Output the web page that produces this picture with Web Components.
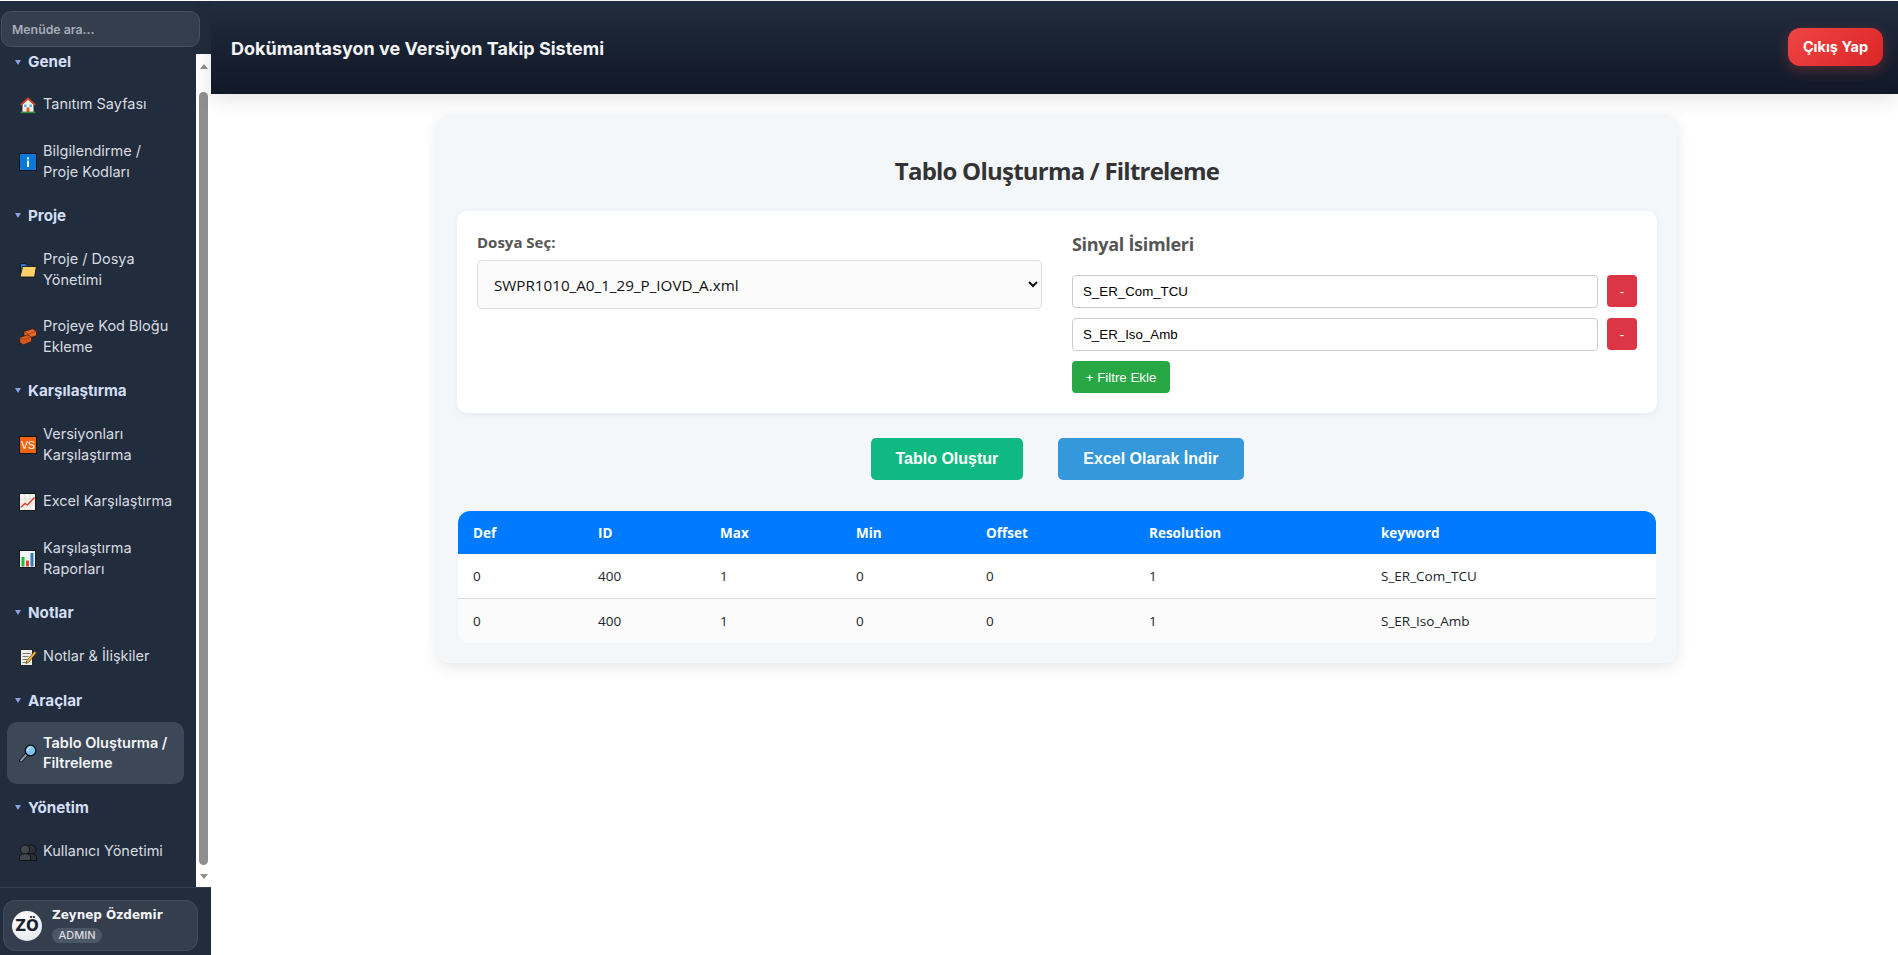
<!DOCTYPE html>
<html lang="tr">
<head>
<meta charset="utf-8">
<title>Dokümantasyon ve Versiyon Takip Sistemi</title>
<style>
    html, body { margin: 0; height: 100%; background: #fff; overflow: hidden; }
    body { font-family: "Open Sans", "Noto Sans", sans-serif; }
</style>
</head>
<body>
<app-shell>
    <app-sidebar slot="sidebar">
        <nav-heading>Genel</nav-heading>
        <nav-item icon="house">Tanıtım Sayfası</nav-item>
        <nav-item icon="info">Bilgilendirme / Proje Kodları</nav-item>
        <nav-heading>Proje</nav-heading>
        <nav-item icon="folder">Proje / Dosya Yönetimi</nav-item>
        <nav-item icon="bricks">Projeye Kod Bloğu Ekleme</nav-item>
        <nav-heading>Karşılaştırma</nav-heading>
        <nav-item icon="vs">Versiyonları Karşılaştırma</nav-item>
        <nav-item icon="trend">Excel Karşılaştırma</nav-item>
        <nav-item icon="bars">Karşılaştırma Raporları</nav-item>
        <nav-heading>Notlar</nav-heading>
        <nav-item icon="memo">Notlar &amp; İlişkiler</nav-item>
        <nav-heading>Araçlar</nav-heading>
        <nav-item icon="search" active>Tablo Oluşturma / Filtreleme</nav-item>
        <nav-heading>Yönetim</nav-heading>
        <nav-item icon="users">Kullanıcı Yönetimi</nav-item>
    </app-sidebar>
    <top-header slot="header"></top-header>
    <filter-page></filter-page>
</app-shell>

<script>
    // kucuk yardimci: shadow root'u string'den kurar
    function mount(el, html) {
        el.attachShadow({ mode: 'open' }).innerHTML = html;
    }

    const ICONS = {
        house: `<path d="M9 1.5 1.5 8.5h2V16h11V8.5h2z" fill="#f5f0e6"/><path d="M9 1 1 8.6l1.2 1L9 3.4l6.8 6.2 1.2-1z" fill="#d9472f" stroke="#5a1d12" stroke-width=".5"/><rect x="5" y="8.5" width="2.6" height="2.6" fill="#5ab8ec"/><rect x="10.4" y="8.5" width="2.6" height="2.6" fill="#5ab8ec"/><rect x="7.6" y="11.5" width="2.8" height="4.5" fill="#e8552f"/><rect x="1.5" y="15.6" width="15" height="1.6" fill="#2f8f3a"/>`,
        info: `<rect x=".5" y=".5" width="17" height="17" fill="#0a78d4" stroke="#0b1420"/><rect x="8" y="7.6" width="2" height="6.4" fill="#fff"/><rect x="8" y="4.4" width="2" height="2" fill="#fff"/>`,
        folder: `<path d="M1.5 14.5V2.5h5l1.2 1.6H14v3" fill="#2f78c4" stroke="#10161f" stroke-width=".9"/><path d="M3.6 5.5H17.4l-1.8 10.5H1z" fill="#fdd068" stroke="#10161f" stroke-width=".9" stroke-linejoin="round"/>`,
        bricks: `<path d="M5 3.5 13.5.8 17.5 3v4.5L9.5 10.5 5 8z" fill="#e5682a" stroke="#2c1a12" stroke-width=".7"/><path d="M.8 9.5 8.5 6.8 12.5 9v4.5L4.5 16.8.8 14.5z" fill="#d9591f" stroke="#2c1a12" stroke-width=".7"/><path d="M5 3.5 9.5 6l8-3M.8 9.5l3.8 2.3 7.9-2.8" fill="none" stroke="#8e3a14" stroke-width=".7"/>`,
        vs: `<rect x=".5" y=".5" width="17" height="17" fill="#f2640f" stroke="#1a120c"/><text x="9" y="13" text-anchor="middle" font-family="Liberation Sans, sans-serif" font-size="10.5" fill="#fff">VS</text>`,
        trend: `<rect x=".5" y=".5" width="16" height="17" fill="#f5f3ef" stroke="#14171c"/><path d="M1 6h15M1 11h15M6 1v16M11 1v16" stroke="#d8d5cf" stroke-width=".6"/><path d="M1.8 14.5 6 10.5l2.4 1.6L15.5 4.5" fill="none" stroke="#e8432d" stroke-width="1.5"/>`,
        bars: `<rect x=".5" y=".5" width="16" height="17" fill="#f5f5f5" stroke="#14171c"/><rect x="2.5" y="7" width="3" height="9.5" fill="#27b53b"/><rect x="7" y="10.5" width="3" height="6" fill="#e8432d"/><rect x="11.5" y="3" width="3" height="13.5" fill="#2f78c4"/>`,
        memo: `<path d="M1.5 1.5h12V17.5h-12z" fill="#f0efe9" stroke="#15181d" stroke-width=".9"/><path d="M3.5 5.5h8M3.5 8.5h6M3.5 11.5h5M3.5 14.5h4" stroke="#77797d" stroke-width="1"/><path d="M7.5 13 15.5 3.2l2 1.6-8 9.8-2.6.9z" fill="#f4b62d" stroke="#3d2a0a" stroke-width=".6"/>`,
        search: `<path d="M2 16.5 7.5 10.5" stroke="#10131a" stroke-width="4" stroke-linecap="round"/><path d="M2 16.5 7.5 10.5" stroke="#8f9aa8" stroke-width="2" stroke-linecap="round"/><circle cx="11.5" cy="6.5" r="5.3" fill="#7fc4ef" stroke="#10131a" stroke-width="1.3"/><path d="M8.6 7a3 3 0 0 1 3-3.4" fill="none" stroke="#dff3ff" stroke-width="1.1"/>`,
        users: `<circle cx="12.5" cy="6.5" r="4.6" fill="#2c2f35" stroke="#0a0b0e" stroke-width=".8"/><path d="M7.5 17.5v-3c0-2.6 2-3.8 5-3.8s5 1.2 5 3.8v3z" fill="#2c2f35" stroke="#0a0b0e" stroke-width=".8"/><circle cx="6" cy="6.5" r="4.6" fill="#43464d" stroke="#0a0b0e" stroke-width=".8"/><path d="M.5 17.5v-3c0-2.6 2.2-3.8 5.6-3.8s5.6 1.2 5.6 3.8v3z" fill="#43464d" stroke="#0a0b0e" stroke-width=".8"/>`
    };

    class AppShell extends HTMLElement {
        constructor() {
            super();
            mount(this, `
                <style>
                    :host { display: grid; grid-template-columns: 211px 1fr; height: 955px; box-sizing: border-box; padding-top: 1px; }
                    .main { display: flex; flex-direction: column; min-width: 0; }
                    .content { flex: 1; display: flex; justify-content: center; align-items: flex-start; padding-top: 21px; }
                </style>
                <slot name="sidebar"></slot>
                <div class="main">
                    <slot name="header"></slot>
                    <div class="content"><slot></slot></div>
                </div>
            `);
        }
    }

    class AppSidebar extends HTMLElement {
        constructor() {
            super();
            mount(this, `
                <style>
                    :host { display: flex; flex-direction: column; height: 954px; background: #212c3c; font-family: Inter, sans-serif; }
                    .search { padding: 10px 11px 7px 1px; }
                    input {
                        display: block; width: 100%; height: 36px; box-sizing: border-box;
                        padding: 0 10px; background: #343e4d; border: 1px solid #465162; border-radius: 10px;
                        color: #e5e7eb; font: 600 12.3px Inter, sans-serif; outline: none;
                    }
                    input::placeholder { color: #a6adb8; opacity: 1; }
                    .scroller { flex: 1; display: flex; min-height: 0; }
                    nav { flex: 1; min-width: 0; display: flex; flex-direction: column; overflow: hidden; }
                    .bar { width: 15px; background: #fff; display: flex; flex-direction: column; align-items: center; flex: none; }
                    .arrow { width: 0; height: 0; border-left: 4.5px solid transparent; border-right: 4.5px solid transparent; }
                    .arrow.up { margin-top: 10px; border-bottom: 5px solid #8f8f8f; }
                    .arrow.down { margin-top: 9px; border-top: 5px solid #8f8f8f; }
                    .thumb { width: 9px; height: 773px; margin-top: 23px; background: #8f8f8f; border-radius: 5px; }
                    footer { flex: none; height: 68px; box-sizing: border-box; border-top: 1px solid #323d4d; padding: 12px 13px 3px 3px; }
                </style>
                <div class="search"><input type="text" placeholder="Menüde ara..."></div>
                <div class="scroller">
                    <nav><slot></slot></nav>
                    <div class="bar"><div class="arrow up"></div><div class="thumb"></div><div class="arrow down"></div></div>
                </div>
                <footer><user-card name="Zeynep Özdemir" role="ADMIN" initials="ZÖ"></user-card></footer>
            `);
        }
    }

    class NavHeading extends HTMLElement {
        constructor() {
            super();
            mount(this, `
                <style>
                    :host { flex: none; display: flex; align-items: center; gap: 7px; padding: 8.5px 0 14.5px 15px; line-height: 18px; font-size: 15.2px; font-weight: 700; color: #d3def5; }
                    :host(:first-child) { padding-top: 0; margin-top: -1px; padding-bottom: 13px; }
                    .tri { flex: none; width: 0; height: 0; border-left: 3px solid transparent; border-right: 3px solid transparent; border-top: 5px solid #8da2e0; }
                </style>
                <span class="tri"></span><span><slot></slot></span>
            `);
        }
    }

    class NavItem extends HTMLElement {
        constructor() {
            super();
            const icon = ICONS[this.getAttribute('icon')] || '';
            mount(this, `
                <style>
                    :host { flex: none; display: flex; align-items: center; gap: 6px; margin: 0 12px 6px 7px; padding: 10px 8px 10px 12px; min-height: 21px; border-radius: 10px; font-size: 14.5px; line-height: 20.5px; color: #d8dbe0; }
                    :host([active]) { background: #3c4858; color: #f3f4f6; font-weight: 600; margin-top: -2px; padding-top: 10.5px; padding-bottom: 10.5px; }
                    svg { width: 18px; height: 18px; flex: none; }
                </style>
                <svg viewBox="0 0 18 18">${icon}</svg><span><slot></slot></span>
            `);
        }
    }

    class UserCard extends HTMLElement {
        constructor() {
            super();
            mount(this, `
                <style>
                    :host { display: flex; align-items: center; gap: 10px; height: 51px; box-sizing: border-box; padding: 0 8px; background: #343e4d; border: 1px solid #414c5c; border-radius: 12px; }
                    .avatar { width: 30px; height: 30px; flex: none; border-radius: 50%; background: radial-gradient(circle at 40% 35%, #fff, #dfe2e8); color: #1b2330; display: flex; align-items: center; justify-content: center; font: 700 15px "DejaVu Sans", sans-serif; }
                    .name { font: 700 12px/15px "DejaVu Sans", sans-serif; color: #f3f4f6; }
                    .role { display: inline-block; margin-top: 1px; padding: 0 6.5px; background: #4c5766; border-radius: 8px; font: 500 11px/15px Inter, sans-serif; color: #d8dbe0; }
                </style>
                <div class="avatar">${this.getAttribute('initials')}</div>
                <div><div class="name">${this.getAttribute('name')}</div><div class="role">${this.getAttribute('role')}</div></div>
            `);
        }
    }

    class TopHeader extends HTMLElement {
        constructor() {
            super();
            mount(this, `
                <style>
                    :host { display: flex; align-items: center; justify-content: space-between; height: 93px; box-sizing: border-box; padding: 0 15px 0 20px; background: linear-gradient(180deg, #212c3d, #111827); box-shadow: 0 4px 20px rgba(0,0,0,.12); font-family: Inter, sans-serif; position: relative; }
                    h1 { margin: 2px 0 0; font-size: 18px; font-weight: 700; color: #f3f4f6; }
                    button { width: 95px; height: 38px; margin-top: -2px; padding: 0; border: 0; border-radius: 12px; background: linear-gradient(135deg, #ef4444, #dc2626); color: #fff; font: 700 14.5px Inter, sans-serif; box-shadow: 0 4px 14px rgba(239,68,68,.3); }
                </style>
                <h1>Dokümantasyon ve Versiyon Takip Sistemi</h1>
                <button>Çıkış Yap</button>
            `);
        }
    }

    class SignalRow extends HTMLElement {
        constructor() {
            super();
            mount(this, `
                <style>
                    :host { display: flex; gap: 9px; align-items: flex-start; margin-bottom: 10px; }
                    input { flex: 1; min-width: 0; height: 33px; box-sizing: border-box; padding: 0 10px; border: 1px solid #ccc; border-radius: 4px; background: #fff; font: 13.3px "Liberation Sans", Arial, sans-serif; color: #000; outline: none; }
                    button { width: 30px; height: 32px; padding: 0; border: 0; border-radius: 4px; background: #dc3545; color: #fff; font: 13.3px "Liberation Sans", Arial, sans-serif; }
                </style>
                <input type="text" value="${this.getAttribute('value')}">
                <button>-</button>
            `);
        }
    }

    class ResultTable extends HTMLElement {
        constructor() {
            super();
            const rows = [
                ['0', '400', '1', '0', '0', '1', 'S_ER_Com_TCU'],
                ['0', '400', '1', '0', '0', '1', 'S_ER_Iso_Amb']
            ];
            const widths = [125, 122, 136, 130, 163, 232, 290];
            mount(this, `
                <style>
                    :host { display: block; margin-left: 1px; margin-right: 1px; border-radius: 12px; overflow: hidden; background: #fff; }
                    table { width: 100%; border-collapse: collapse; table-layout: fixed; font-family: "Open Sans", sans-serif; font-size: 14px; }
                    th { height: 43px; padding: 0 15px; background: #007bff; color: #fff; font-size: 13.5px; font-weight: 700; text-align: left; }
                    td { height: 44px; padding: 0 15px; color: #212529; font-size: 13.5px; border-bottom: 1px solid #ddd; }
                    tr:nth-child(even) td { background: #fbfbfb; }
                    tr:last-child td { border-bottom: 0; }
                </style>
                <table>
                    <colgroup>${widths.map(w => `<col style="width:${w}px">`).join('')}</colgroup>
                    <thead><tr>${['Def', 'ID', 'Max', 'Min', 'Offset', 'Resolution', 'keyword'].map(h => `<th>${h}</th>`).join('')}</tr></thead>
                    <tbody>${rows.map(r => `<tr>${r.map(c => `<td>${c}</td>`).join('')}</tr>`).join('')}</tbody>
                </table>
            `);
        }
    }

    class FilterPage extends HTMLElement {
        constructor() {
            super();
            mount(this, `
                <style>
                    :host { display: block; width: 1240px; height: 548px; box-sizing: border-box; margin-left: 5px; padding: 20px; background: #f4f7fa; border-radius: 12px; box-shadow: 0 4px 15px rgba(0,0,0,.1); font-family: "Open Sans", sans-serif; }
                    h2 { margin: 19px 0 24px; text-align: center; font-size: 24px; line-height: 33px; font-weight: 700; letter-spacing: -.78px; color: #333; }
                    .panel { display: grid; grid-template-columns: 565px 1fr; gap: 30px; height: 202px; box-sizing: border-box; padding: 20px; background: #fff; border-radius: 10px; box-shadow: 0 2px 8px rgba(0,0,0,.05); }
                    label { display: block; margin: 1px 0 8px; font-size: 15px; line-height: 20px; font-weight: 700; color: #555; }
                    select { display: block; width: 100%; height: 49px; box-sizing: border-box; padding: 0 12px; border: 1px solid #ddd; border-radius: 5px; background: #fbfbfb; font: 15.2px "Open Sans", sans-serif; color: #111; outline: none; }
                    h3 { margin: 1px 0 18px; font-size: 18px; line-height: 25px; font-weight: 700; letter-spacing: -.3px; color: #555; }
                    .add { display: block; width: 98px; height: 32px; padding: 0; border: 0; border-radius: 4px; background: #28a745; color: #fff; font: 13.3px "Liberation Sans", Arial, sans-serif; }
                    .actions { display: flex; justify-content: center; gap: 35px; margin: 25px 0 31px; }
                    .actions button { height: 42px; padding: 0 25px; border: 0; border-radius: 5px; color: #fff; font: 700 16px "Liberation Sans", Arial, sans-serif; }
                    .green { background: #10b981; }
                    .blue { background: #3498db; }
                </style>
                <h2>Tablo Oluşturma / Filtreleme</h2>
                <div class="panel">
                    <div>
                        <label>Dosya Seç:</label>
                        <select><option>SWPR1010_A0_1_29_P_IOVD_A.xml</option></select>
                    </div>
                    <div>
                        <h3>Sinyal İsimleri</h3>
                        <signal-row value="S_ER_Com_TCU"></signal-row>
                        <signal-row value="S_ER_Iso_Amb"></signal-row>
                        <button class="add">+ Filtre Ekle</button>
                    </div>
                </div>
                <div class="actions">
                    <button class="green">Tablo Oluştur</button>
                    <button class="blue">Excel Olarak İndir</button>
                </div>
                <result-table></result-table>
            `);
        }
    }

    customElements.define('nav-heading', NavHeading);
    customElements.define('nav-item', NavItem);
    customElements.define('user-card', UserCard);
    customElements.define('signal-row', SignalRow);
    customElements.define('result-table', ResultTable);
    customElements.define('top-header', TopHeader);
    customElements.define('filter-page', FilterPage);
    customElements.define('app-sidebar', AppSidebar);
    customElements.define('app-shell', AppShell);
</script>
</body>
</html>
